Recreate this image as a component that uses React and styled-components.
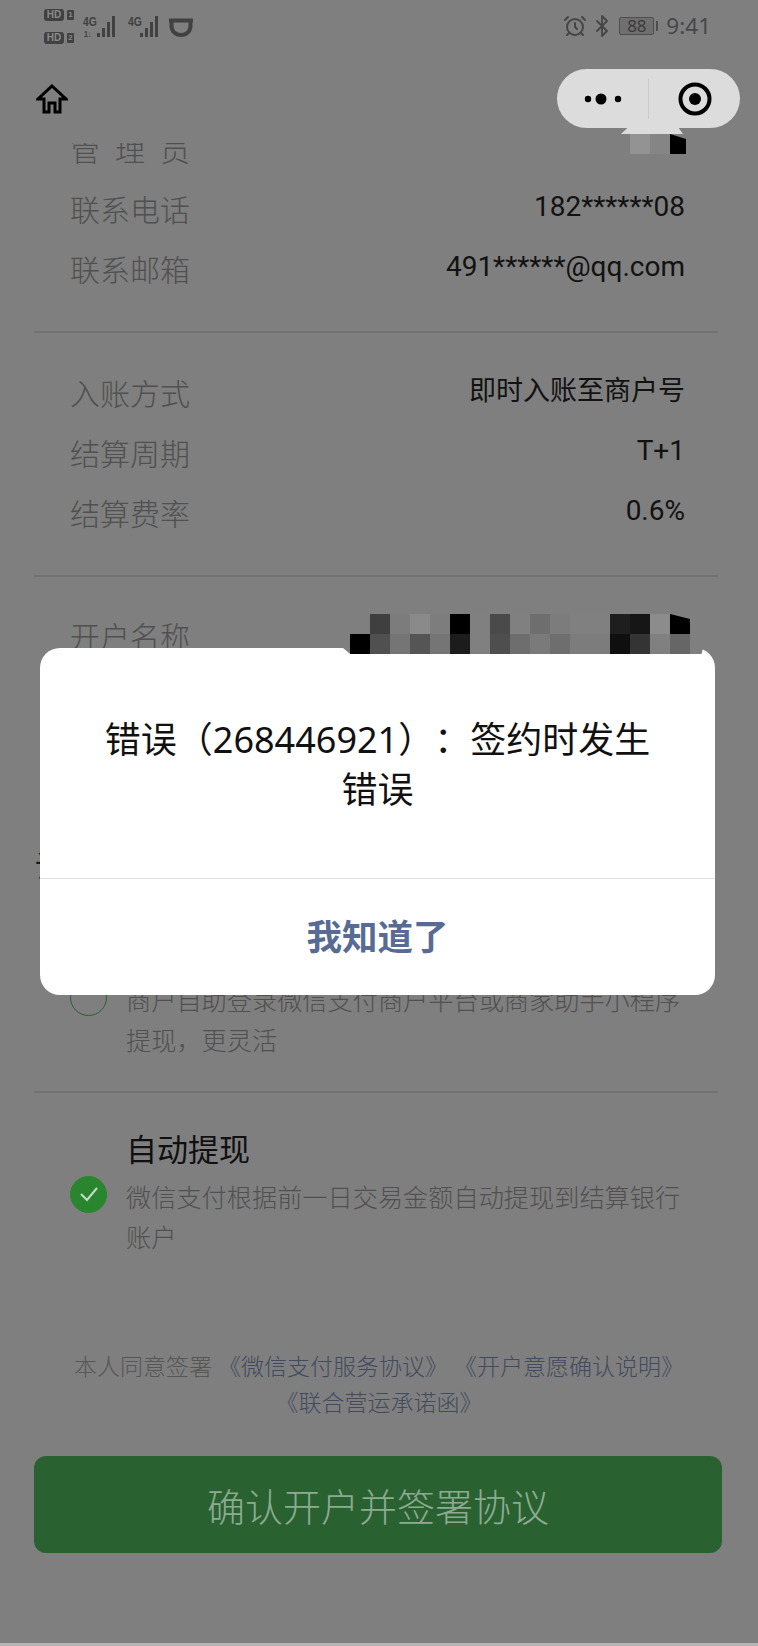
import React from 'react';
import styled, { createGlobalStyle } from 'styled-components';
import { AlarmClock, Bluetooth } from 'lucide-react';

const GlobalStyle = createGlobalStyle`
  html, body {
    margin: 0;
    padding: 0;
    background: #7f7f7f;
  }
  * {
    box-sizing: border-box;
  }
`;

const Page = styled.div`
  position: relative;
  width: 758px;
  height: 1646px;
  overflow: hidden;
  display: flex;
  flex-direction: column;
  background: #7f7f7f;
  font-family: "Noto Sans", "Noto Sans CJK SC", sans-serif;
  text-spacing-trim: space-all;
`;

const Header = styled.header`
  position: relative;
  z-index: 2;
  flex: none;
  height: 143px;
  background: #7f7f7f;
`;

const StatusBar = styled.div`
  height: 69px;
  padding: 9px 47px 0 44px;
  display: flex;
  justify-content: space-between;
  align-items: flex-start;
  color: #414141;
`;

const StatusGroup = styled.div`
  display: flex;
  align-items: flex-start;
`;

const SimStack = styled.div`
  display: flex;
  flex-direction: column;
  gap: 11px;
  margin-right: 9px;
`;

const SimRow = styled.div`
  display: flex;
  align-items: center;
  gap: 3px;
`;

const HdBadge = styled.span`
  width: 20px;
  height: 12px;
  border-radius: 3px;
  background: #414141;
  color: #8a8a8a;
  font: 700 10px/12px "Liberation Sans", sans-serif;
  text-align: center;
`;

const SimNumber = styled.span`
  width: 7px;
  height: 10px;
  border-radius: 1px;
  background: #414141;
  color: #8a8a8a;
  font: 700 8px/10px "Liberation Sans", sans-serif;
  text-align: center;
`;

const Signal = styled.div`
  position: relative;
  width: ${(p) => p.$width}px;
  height: 24px;
  margin-top: 6px;
  margin-right: ${(p) => p.$gap}px;
`;

const NetLabel = styled.span`
  position: absolute;
  left: ${(p) => p.$left}px;
  top: ${(p) => p.$top}px;
  font: 700 ${(p) => p.$size}px/1 "Liberation Sans", sans-serif;
  color: #414141;
  transform: scaleX(0.8);
  transform-origin: left center;
`;

const BarsIcon = styled.svg`
  position: absolute;
  right: 0;
  top: 0;
`;

const CupIcon = styled.svg`
  margin-top: 9px;
`;

const AlarmIcon = styled(AlarmClock)`
  margin-top: 5px;
  margin-right: 3px;
`;

const BluetoothIcon = styled(Bluetooth)`
  margin-top: 5px;
  margin-right: 5px;
`;

const Battery = styled.div`
  width: 35px;
  height: 18px;
  margin-top: 8px;
  border: 1.5px solid #4e4e4e;
  border-radius: 2px;
  background: #6f6f6f;
  color: #3a3a3a;
  font: 400 17px/15px "Noto Sans", sans-serif;
  text-align: center;
`;

const BatteryNub = styled.div`
  width: 2px;
  height: 10px;
  margin: 12px 8px 0 2px;
  background: #4e4e4e;
`;

const Clock = styled.span`
  font-size: 22.5px;
  line-height: 32px;
  margin-top: 1px;
  color: #474747;
`;

const NavBar = styled.div`
  height: 59px;
  padding: 0 18px 0 36px;
  display: flex;
  justify-content: space-between;
  align-items: center;
`;

const HomeIcon = styled.svg`
  display: block;
`;

const Capsule = styled.div`
  position: relative;
  width: 183px;
  height: 59px;
  border-radius: 30px;
  background: #dcdcdc;
  display: flex;
  align-items: center;
`;

const CapsuleHalf = styled.div`
  flex: 1;
  height: 100%;
  display: flex;
  align-items: center;
  justify-content: center;
`;

const CapsuleDivider = styled.div`
  width: 1px;
  height: 40px;
  background: #cbcbcb;
`;

const CapsuleTail = styled.div`
  position: absolute;
  left: 64px;
  top: 58px;
  width: 62px;
  height: 7px;
  background: #dcdcdc;
  clip-path: polygon(12% 0, 92% 0, 100% 100%, 0 100%);
`;

const HeaderMosaic = styled.div`
  position: absolute;
  left: 73px;
  top: 65px;
  display: grid;
  grid-template-columns: 20px 20px 16px;
  grid-auto-rows: 20px;
`;

const Content = styled.main`
  flex: none;
  margin-top: -23px;
  display: flex;
  flex-direction: column;
`;

const InfoSection = styled.section`
  padding: ${(p) => p.$top}px 73px 31px 70px;
`;

const Row = styled.div`
  height: 60px;
  display: flex;
  justify-content: space-between;
  align-items: center;
`;

const Label = styled.span`
  font-size: 30px;
  line-height: 40px;
  font-weight: 300;
  color: #505050;
  letter-spacing: ${(p) => p.$spacing || 0}px;
`;

const Value = styled.span`
  font-family: Roboto, "Noto Sans CJK SC", sans-serif;
  font-size: ${(p) => p.$size || 28}px;
  line-height: 40px;
  color: #121212;
  margin-top: -6px;
`;

const Divider = styled.hr`
  flex: none;
  width: 684px;
  height: 2px;
  margin: 0 0 0 34px;
  border: 0;
  background: #727272;
`;

const SectionTitle = styled.h2`
  margin: 88px 0 0 35px;
  height: 40px;
  font-size: 30px;
  line-height: 40px;
  font-weight: 400;
  color: #1a1a1a;
`;

const Option = styled.div`
  display: flex;
  align-items: center;
  gap: 19px;
  padding: ${(p) => p.$top}px 70px 31px 70px;
`;

const Radio = styled.span`
  flex: none;
  width: 37px;
  height: 37px;
  margin-top: 6px;
  border-radius: 50%;
  display: flex;
  align-items: center;
  justify-content: center;
  border: 1.5px solid ${(p) => (p.$checked ? '#2a862e' : '#2a6131')};
  background: ${(p) => (p.$checked ? '#2a862e' : 'transparent')};
`;

const OptionBody = styled.div`
  flex: 1;
`;

const OptionTitle = styled.div`
  font-size: 31px;
  line-height: 48px;
  margin-bottom: 4px;
  color: #101010;
`;

const OptionDesc = styled.div`
  font-size: 25.2px;
  line-height: 40px;
  font-weight: 300;
  color: #505050;
`;

const Agreement = styled.p`
  margin: 60px 0 0;
  text-align: center;
  font-size: 23px;
  line-height: 36px;
  font-weight: 300;
  color: #565656;
`;

const AgreementLink = styled.span`
  color: #424a5e;
`;

const ConfirmButton = styled.button`
  display: block;
  width: 688px;
  height: 97px;
  margin: 36px 0 0 34px;
  border: 0;
  border-radius: 12px;
  background: #2a6131;
  color: #8cab91;
  font-family: inherit;
  font-size: 38px;
  font-weight: 300;
`;

const BottomStrip = styled.div`
  margin-top: auto;
  height: 3px;
  background: #b4b4b4;
`;

const Overlay = styled.div`
  position: absolute;
  z-index: 3;
  inset: 0;
  padding: 648px 3px 0 0;
  display: flex;
  justify-content: center;
  align-items: flex-start;
`;

const Dialog = styled.div`
  position: relative;
  width: 675px;
  height: 347px;
  border-radius: 20px;
  background: #fff;
  display: flex;
  flex-direction: column;
`;

const DialogMessage = styled.div`
  height: 230px;
  padding-top: 3px;
  display: flex;
  align-items: center;
  justify-content: center;
  text-align: center;
  font-size: 36px;
  line-height: 50px;
  color: #111;
`;

const DialogAction = styled.div`
  flex: 1;
  padding-bottom: 6px;
  border-top: 1px solid #e2e2e2;
  display: flex;
  align-items: center;
  justify-content: center;
  font-size: 35.5px;
  font-weight: 700;
  color: #576b95;
`;

const DialogNotch = styled.div`
  position: absolute;
  left: 303px;
  top: 0;
  width: 360px;
  height: 6px;
  background: #7f7f7f;
  clip-path: polygon(0 0, 100% 0, 99.6% 100%, 2% 100%);
`;

const DialogMosaic = styled.div`
  position: absolute;
  left: 350px;
  top: 614px;
  display: grid;
  grid-template-columns: repeat(17, 20px);
  grid-auto-rows: 20px;
`;

const Cell = styled.span`
  background: ${(p) => p.$color};
  clip-path: ${(p) => (p.$cut ? 'polygon(0 0, 100% 25%, 100% 100%, 0 100%)' : 'none')};
`;

const mosaicRows = [
  ['#7f7f7f', '#3f3f3f', '#7c7c7c', '#8a8a8a', '#7d7d7d', '#000', '#808080', '#4a4a4a', '#808080', '#6e6e6e', '#7c7c7c', '#808080', '#808080', '#1e1e1e', '#161616', '#8c8c8c', '#000'],
  ['#000', '#505050', '#757575', '#555', '#757575', '#1c1c1c', '#808080', '#4e4e4e', '#6e6e6e', '#7a7a7a', '#6e6e6e', '#7c7c7c', '#7c7c7c', '#0f0f0f', '#343434', '#808080', '#666'],
];

const Bars = ({ width }) => (
  <BarsIcon width={width} height="24" viewBox="0 0 22 24" fill="#414141">
    <rect x="0" y="18" width="3" height="4" />
    <rect x="5" y="13" width="3" height="9" />
    <rect x="10" y="7" width="3" height="15" />
    <rect x="15" y="1" width="3" height="21" />
  </BarsIcon>
);

const App = () => (
  <Page>
    <GlobalStyle />
    <Header>
      <StatusBar>
        <StatusGroup>
          <SimStack>
            <SimRow>
              <HdBadge>HD</HdBadge>
              <SimNumber>1</SimNumber>
            </SimRow>
            <SimRow>
              <HdBadge>HD</HdBadge>
              <SimNumber>2</SimNumber>
            </SimRow>
          </SimStack>
          <Signal $width={36} $gap={9}>
            <NetLabel $left={0} $top={0} $size={13}>4G</NetLabel>
            <NetLabel $left={1} $top={15} $size={9}>1↓</NetLabel>
            <Bars width={22} />
          </Signal>
          <Signal $width={34} $gap={7}>
            <NetLabel $left={0} $top={0} $size={13}>4G</NetLabel>
            <Bars width={22} />
          </Signal>
          <CupIcon width="24" height="19" viewBox="0 0 24 19" fill="none" stroke="#414141" strokeWidth="4">
            <path d="M0 2.5H24M2.5 2V8C2.5 13 6.5 17 12 17C17.5 17 21.5 13 21.5 8V2" />
          </CupIcon>
        </StatusGroup>
        <StatusGroup>
          <AlarmIcon size={24} strokeWidth={2} color="#454545" />
          <BluetoothIcon size={24} strokeWidth={1.8} color="#454545" />
          <Battery>88</Battery>
          <BatteryNub />
          <Clock>9:41</Clock>
        </StatusGroup>
      </StatusBar>
      <NavBar>
        <HomeIcon width="32" height="30" viewBox="0 0 32 30" fill="none" stroke="#000" strokeWidth="3" strokeLinejoin="miter">
          <path d="M16 2L30 15H24V28H19V19H13V28H8V15H2Z" />
        </HomeIcon>
        <Capsule>
          <CapsuleHalf>
            <svg width="40" height="14" viewBox="0 0 40 14" fill="#000">
              <circle cx="5" cy="7" r="3.2" />
              <circle cx="18" cy="7" r="5.5" />
              <circle cx="35" cy="7" r="3.2" />
            </svg>
          </CapsuleHalf>
          <CapsuleDivider />
          <CapsuleHalf>
            <svg width="34" height="34" viewBox="0 0 34 34" fill="none">
              <circle cx="17" cy="17" r="14.5" stroke="#000" strokeWidth="4" />
              <circle cx="17" cy="17" r="6" fill="#000" />
            </svg>
          </CapsuleHalf>
          <CapsuleTail />
          <HeaderMosaic>
            <Cell $color="#939393" />
            <Cell $color="#858585" />
            <Cell $color="#000" $cut />
          </HeaderMosaic>
        </Capsule>
      </NavBar>
    </Header>

    <Content>
      <InfoSection $top={0}>
        <Row>
          <Label $spacing={15}>管理员</Label>
        </Row>
        <Row>
          <Label>联系电话</Label>
          <Value>182******08</Value>
        </Row>
        <Row>
          <Label>联系邮箱</Label>
          <Value>491******@qq.com</Value>
        </Row>
      </InfoSection>
      <Divider />
      <InfoSection $top={31}>
        <Row>
          <Label>入账方式</Label>
          <Value $size={27}>即时入账至商户号</Value>
        </Row>
        <Row>
          <Label>结算周期</Label>
          <Value>T+1</Value>
        </Row>
        <Row>
          <Label>结算费率</Label>
          <Value>0.6%</Value>
        </Row>
      </InfoSection>
      <Divider />
      <InfoSection $top={30}>
        <Row>
          <Label>开户名称</Label>
        </Row>
        <Row>
          <Label>开户银行</Label>
        </Row>
      </InfoSection>
      <SectionTitle>设置提现方式</SectionTitle>
      <Option $top={42}>
        <Radio />
        <OptionBody>
          <OptionTitle>手动提现</OptionTitle>
          <OptionDesc>商户自助登录微信支付商户平台或商家助手小程序提现，更灵活</OptionDesc>
        </OptionBody>
      </Option>
      <Divider />
      <Option $top={32}>
        <Radio $checked>
          <svg width="20" height="16" viewBox="0 0 20 16" fill="none" stroke="#c9dcc9" strokeWidth="2">
            <path d="M2 8L8 14L18 2" />
          </svg>
        </Radio>
        <OptionBody>
          <OptionTitle>自动提现</OptionTitle>
          <OptionDesc>微信支付根据前一日交易金额自动提现到结算银行账户</OptionDesc>
        </OptionBody>
      </Option>
      <Agreement>
        本人同意签署 <AgreementLink>《微信支付服务协议》 《开户意愿确认说明》</AgreementLink>
        <br />
        <AgreementLink>《联合营运承诺函》</AgreementLink>
      </Agreement>
      <ConfirmButton>确认开户并签署协议</ConfirmButton>
    </Content>
    <BottomStrip />

    <Overlay>
      <Dialog>
        <DialogNotch />
        <DialogMessage>
          <div>
            错误（268446921）：签约时发生
            <br />
            错误
          </div>
        </DialogMessage>
        <DialogAction>我知道了</DialogAction>
      </Dialog>
      <DialogMosaic>
        {mosaicRows.flat().map((color, i) => (
          <Cell key={i} $color={color} $cut={i === 16} />
        ))}
      </DialogMosaic>
    </Overlay>
  </Page>
);

export default App;
